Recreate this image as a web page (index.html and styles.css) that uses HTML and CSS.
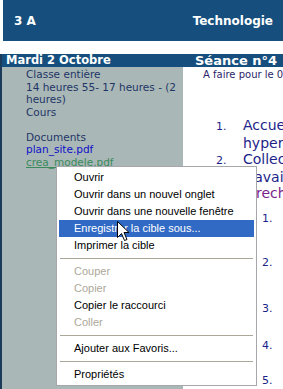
FILE: index.html
```html
<!DOCTYPE html>
<html lang="fr">
<head>
  <meta charset="UTF-8" />
  <title>Cahier de textes</title>
  <link rel="stylesheet" href="styles.css">
</head>
<body>

<header class="barre">
  <span>3 A</span>
  <span>Technologie</span>
</header>

<div class="ligne">
  <!-- Colonne du jour -->
  <div class="jour">
    <div class="jour-titre">Mardi 2 Octobre</div>
    <div class="jour-corps">
      Classe entière<br>
      14 heures 55- 17 heures - (2<br>
      heures)<br>
      Cours<br>
      <br>
      Documents<br>
      <a href="#" class="doc">plan_site.pdf</a><br>
      <a href="#" class="doc vu">crea_modele.pdf</a>
    </div>
  </div>

  <!-- Colonne de la séance -->
  <div class="seance">
    <div class="seance-titre">Séance n°4</div>
    <div class="seance-corps">
      <p class="afaire">A faire pour le 09/10</p>
      <ol class="travail">
        <li>Accueil et<br>hyperliens</li>
        <li>Collecter le<br>travail disponible<br><span class="vu">à rechercher</span>
          <ol class="etapes">
            <li class="e1">Ouvrir le fichier</li>
            <li class="e2">Enregistrer le modèle</li>
            <li class="e3">Modifier le modèle</li>
            <li class="e4">Imprimer</li>
            <li class="e5">Rendre le travail</li>
          </ol>
        </li>
      </ol>
    </div>
  </div>
</div>

<!-- Menu contextuel -->
<ul class="menu">
  <li>Ouvrir</li>
  <li>Ouvrir dans un nouvel onglet</li>
  <li>Ouvrir dans une nouvelle fenêtre</li>
  <li class="actif">Enregistrer la cible sous...</li>
  <li>Imprimer la cible</li>
  <li class="sep"></li>
  <li class="off">Couper</li>
  <li class="off">Copier</li>
  <li>Copier le raccourci</li>
  <li class="off">Coller</li>
  <li class="sep"></li>
  <li>Ajouter aux Favoris...</li>
  <li class="sep"></li>
  <li>Propriétés</li>
</ul>

<svg class="curseur" width="13" height="20" viewBox="0 0 13 20">
  <path d="M0.5 0.5 L0.5 16.5 L4.5 12.5 L7.5 19.5 L10 18.5 L7 11.5 L12 11.5 Z" fill="#fff" stroke="#000" stroke-width="1"/>
</svg>

</body>
</html>
```

FILE: styles.css
```css
* {
  box-sizing: border-box;
}

body {
  margin: 0;
  width: 283px;
  height: 389px;
  overflow: hidden;
  background: #fff;
  font-family: "DejaVu Sans", Verdana, sans-serif;
  position: relative;
}

.barre {
  height: 41px;
  margin-left: 3px;
  background: #164f7e;
  color: #fff;
  font-weight: bold;
  font-size: 12px;
  display: flex;
  justify-content: space-between;
  align-items: center;
  padding: 0 10px 0 11px;
}

.ligne {
  display: flex;
  margin-top: 13px;
  height: 340px;
}

.jour {
  width: 183px;
  flex: none;
  border-left: 2px solid #1c3a5a;
  background: #a9b8b7;
}

.jour-titre,
.seance-titre {
  background: #164f7e;
  color: #fff;
  font-weight: bold;
  height: 13px;
  line-height: 13px;
  white-space: nowrap;
}

.jour-titre {
  font-size: 11.5px;
  padding-left: 4px;
}

.jour-corps {
  padding: 1px 0 0 24px;
  font-size: 10.5px;
  line-height: 12.5px;
  color: #1f3566;
  white-space: nowrap;
}

.doc {
  color: #1010c8;
  text-decoration: none;
}

.doc.vu {
  color: #3c8a5c;
  text-decoration: underline;
}

.seance {
  flex: 1;
  overflow: hidden;
}

.seance-titre {
  font-size: 13px;
  padding-left: 12px;
}

.seance-corps {
  white-space: nowrap;
}

.afaire {
  margin: 2px 0 0 20px;
  font-size: 10px;
  color: #2b1f6b;
}

/* listes numérotées */
.travail,
.etapes {
  list-style: none;
  padding: 0;
  counter-reset: num;
}

.travail {
  margin: 37px 0 0 33px;
  font-size: 14px;
  line-height: 16px;
  color: #1d1f8a;
}

.travail li {
  counter-increment: num;
  padding-left: 27px;
  text-indent: -27px;
}

.travail li::before {
  content: counter(num) ".";
  display: inline-block;
  width: 27px;
  text-indent: 0;
  font-size: 11px;
}

.travail .vu {
  color: #7a1f8a;
}

.etapes {
  margin: 11px 0 0 19px;
  font-size: 11px;
  line-height: 14px;
}

.e1 { height: 44px; }
.e2 { height: 46px; }
.e3 { height: 37px; }
.e4 { height: 35px; }

/* menu contextuel */
.menu {
  position: absolute;
  left: 56px;
  top: 166px;
  width: 201px;
  margin: 0;
  padding: 2px;
  list-style: none;
  background: #fff;
  border: 1px solid #a7a6aa;
  font-family: "Liberation Sans", Arial, sans-serif;
  font-size: 11px;
  color: #000;
}

.menu li {
  height: 17px;
  line-height: 17px;
  padding-left: 15px;
}

.menu li.actif {
  background: #316ac5;
  color: #fff;
}

.menu li.off {
  color: #aca899;
}

.menu li.sep {
  height: 9px;
  padding: 0;
  margin: 0 1px;
  position: relative;
}

.menu li.sep::after {
  content: "";
  position: absolute;
  left: 0;
  right: 0;
  top: 4px;
  border-top: 1px solid #aca899;
}

.curseur {
  position: absolute;
  left: 117px;
  top: 221px;
}
```
